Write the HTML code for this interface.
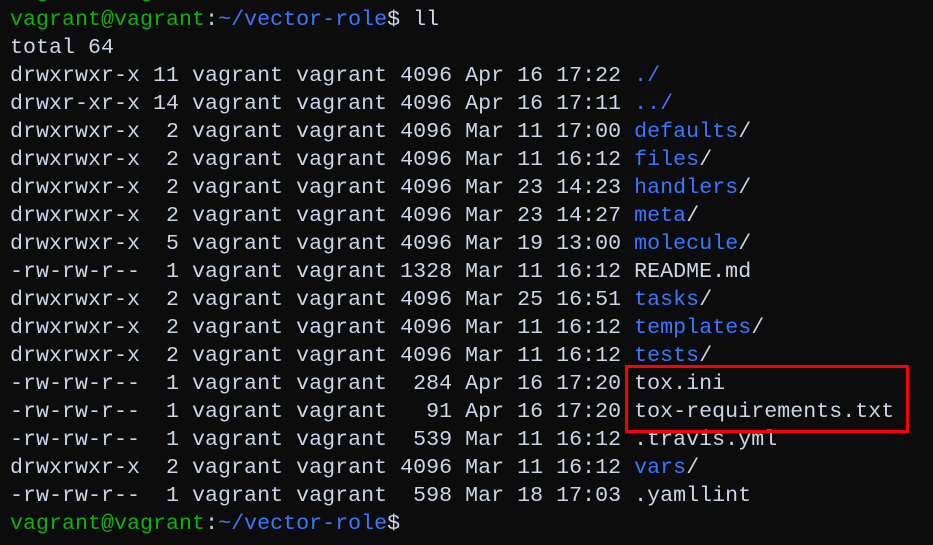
<!DOCTYPE html>
<html><head><meta charset="utf-8"><style>
html,body{margin:0;padding:0;background:#0c0c0c;width:933px;height:545px;overflow:hidden}
pre{position:absolute;left:10px;top:-22px;margin:0;font-family:"Liberation Mono","DejaVu Sans Mono",monospace;font-size:21.6px;letter-spacing:0.045px;line-height:28px;color:#ccd6e6}
.g{color:#13b10e}.b{color:#3b78ff}
.box{position:absolute;left:625px;top:365px;width:278px;height:62px;border:3px solid #f00}
</style></head><body>
<pre><span class="g">vagrant@vagrant</span>:<span class="b">~</span>$ cd vector-role/
<span class="g">vagrant@vagrant</span>:<span class="b">~/vector-role</span>$ ll
total 64
drwxrwxr-x 11 vagrant vagrant 4096 Apr 16 17:22 <span class="b">./</span>
drwxr-xr-x 14 vagrant vagrant 4096 Apr 16 17:11 <span class="b">../</span>
drwxrwxr-x  2 vagrant vagrant 4096 Mar 11 17:00 <span class="b">defaults</span>/
drwxrwxr-x  2 vagrant vagrant 4096 Mar 11 16:12 <span class="b">files</span>/
drwxrwxr-x  2 vagrant vagrant 4096 Mar 23 14:23 <span class="b">handlers</span>/
drwxrwxr-x  2 vagrant vagrant 4096 Mar 23 14:27 <span class="b">meta</span>/
drwxrwxr-x  5 vagrant vagrant 4096 Mar 19 13:00 <span class="b">molecule</span>/
-rw-rw-r--  1 vagrant vagrant 1328 Mar 11 16:12 README.md
drwxrwxr-x  2 vagrant vagrant 4096 Mar 25 16:51 <span class="b">tasks</span>/
drwxrwxr-x  2 vagrant vagrant 4096 Mar 11 16:12 <span class="b">templates</span>/
drwxrwxr-x  2 vagrant vagrant 4096 Mar 11 16:12 <span class="b">tests</span>/
-rw-rw-r--  1 vagrant vagrant  284 Apr 16 17:20 tox.ini
-rw-rw-r--  1 vagrant vagrant   91 Apr 16 17:20 tox-requirements.txt
-rw-rw-r--  1 vagrant vagrant  539 Mar 11 16:12 .travis.yml
drwxrwxr-x  2 vagrant vagrant 4096 Mar 11 16:12 <span class="b">vars</span>/
-rw-rw-r--  1 vagrant vagrant  598 Mar 18 17:03 .yamllint
<span class="g">vagrant@vagrant</span>:<span class="b">~/vector-role</span>$</pre>
<div class="box"></div>
</body></html>
